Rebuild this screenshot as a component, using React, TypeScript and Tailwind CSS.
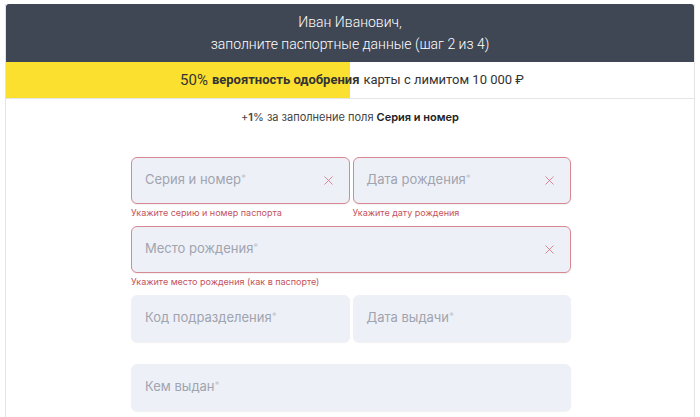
import { X } from "lucide-react"

function Field({
  label,
  error,
  invalid,
  wide,
}: {
  label: string
  error?: string
  invalid?: boolean
  wide?: boolean
}) {
  return (
    <div className={wide ? "col-span-2" : ""}>
      <div
        className={`h-[47px] rounded-md bg-[#eef0f8] flex items-center justify-between pl-[13px] pr-[13px] border shadow-[0_1px_1px_rgba(0,0,0,0.06)] ${
          invalid ? "border-[#d88892]" : "border-[#eef0f8]"
        }`}
      >
        <span className="text-[13px] text-[#a0a4ae]">
          {label}
          <span className="text-[#c4c7d0] align-top text-[10px] relative top-[1px]">*</span>
        </span>
        {invalid && <X size={15} strokeWidth={1.3} color="#d9707b" />}
      </div>
      <div className="h-[22px] pt-[2px] text-[9px] leading-[13px] text-[#c5525d]">
        {error}
      </div>
    </div>
  )
}

export default function App() {
  return (
    <div className="w-[700px] h-[417px] bg-white overflow-hidden pt-[4px] pl-[5px] pr-[5px] font-['Inter','Noto_Sans',sans-serif]">
      <div className="border-l border-r border-[#e4e4e4] h-[420px]">
        <div className="h-[58px] bg-[#3f4654] rounded-t-[3px] text-white text-center font-['Roboto',sans-serif] font-light text-[14px] leading-[22px] pt-[7px]">
          <div>Иван Иванович,</div>
          <div>заполните паспортные данные (шаг 2 из 4)</div>
        </div>

        <div className="relative h-[37px] border-b border-[#e4e4e4] font-['Roboto',sans-serif]">
          <div className="absolute left-0 top-0 bottom-0 w-1/2 bg-[#fbe02f]" />
          <div className="relative h-full flex items-center justify-center pl-[4px] text-[13px] text-[#333]">
            <span className="text-[15px] mr-[4px]">50%</span>
            <span className="font-bold mr-[4px]">вероятность одобрения</span>
            <span>карты с лимитом 10 000 ₽</span>
          </div>
        </div>

        <div className="pt-[10px] text-center text-[11px] text-[#444]">
          +<span className="font-semibold">1</span>% за заполнение поля{" "}
          <span className="font-semibold text-[#222]">Серия и номер</span>
        </div>

        <div className="w-[440px] ml-[125px] mt-[31px] grid grid-cols-2 gap-x-[3px]">
          <Field label="Серия и номер" error="Укажите серию и номер паспорта" invalid />
          <Field label="Дата рождения" error="Укажите дату рождения" invalid />
          <Field label="Место рождения" error="Укажите место рождения (как в паспорте)" invalid wide />
          <Field label="Код подразделения" />
          <Field label="Дата выдачи" />
          <Field label="Кем выдан" wide />
        </div>
      </div>
    </div>
  )
}
